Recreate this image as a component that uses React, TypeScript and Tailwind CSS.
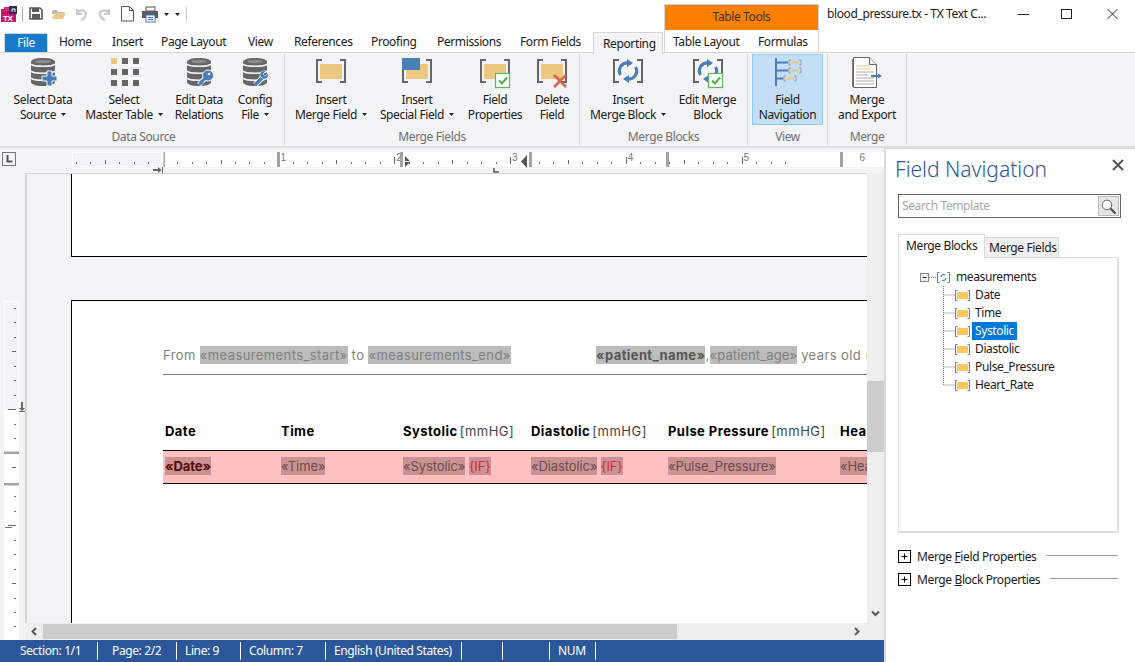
import type { ReactNode } from "react";

const GREY = "#666666";
const TAN = "#ecc77f";
const BLUE = "#4a7fb8";

const tabs = [
  { label: "Home", cls: "w-[53px] pl-[11px]" },
  { label: "Insert", cls: "w-[49px] pl-[11px]" },
  { label: "Page Layout", cls: "w-[87px] pl-[11px]" },
  { label: "View", cls: "w-[46px] pl-[11px]" },
  { label: "References", cls: "w-[77px] pl-[11px]" },
  { label: "Proofing", cls: "w-[66px] pl-[11px]" },
  { label: "Permissions", cls: "w-[83px] pl-[11px]" },
  { label: "Form Fields", cls: "w-[84px] pl-[11px]" },
];

function QuickAccess() {
  return (
    <svg width="190" height="31" viewBox="0 0 190 31">
      {/* app icon */}
      <rect x="1" y="9" width="15" height="13" fill="#c2186b" />
      <rect x="4" y="7" width="8" height="4" fill="#d92a7c" />
      <rect x="9" y="6" width="8" height="8" fill="#2d2a5c" />
      <path d="M12 12V9h3v3" stroke="#fff" strokeWidth="1" fill="none" />
      <text x="3" y="21" fontSize="8" fontWeight="700" fill="#fff" fontFamily="Liberation Sans, sans-serif">TX</text>
      <rect x="22" y="7" width="1" height="15" fill="#b0b0b0" />
      {/* save */}
      <path d="M30 8h10l2 2v9H30z" fill="none" stroke="#5a5a5a" strokeWidth="1.6" />
      <rect x="32" y="8" width="7" height="4" fill="#5a5a5a" />
      <rect x="32" y="14" width="8" height="5" fill="#5a5a5a" />
      {/* open */}
      <path d="M52 12l1-2h4l1 2h6v2H52z" fill="#b9b9b9" />
      <path d="M52 19l3-6h11l-3 6z" fill="#f0c98a" />
      {/* undo + redo */}
      <path d="M77 9v5h5M77 13c3-4 9-3 9 1 0 3-2 5-5 6" fill="none" stroke="#c9c9c9" strokeWidth="2.2" />
      <path d="M109 9v5h-5M109 13c-3-4-9-3-9 1 0 3 2 5 5 6" fill="none" stroke="#c9c9c9" strokeWidth="2.2" />
      {/* new page */}
      <path d="M121.500 6.500h8l4 4v10.500h-12zM129.500 6.500v4h4" fill="#fff" stroke="#555" strokeWidth="1" />
      {/* print */}
      <rect x="146" y="7" width="9" height="4" fill="#fff" stroke="#555" />
      <rect x="142" y="11" width="16" height="7" fill="#5a5a5a" />
      <rect x="146" y="15" width="9" height="7" fill="#fff" stroke="#3f78b3" />
      <rect x="148" y="17" width="5" height="1" fill="#3f78b3" />
      <rect x="148" y="19" width="5" height="1" fill="#3f78b3" />
      <path d="M164 13h5l-2.500 3zM175 13h5l-2.500 3z" fill="#222" />
      <rect x="186" y="7" width="1" height="15" fill="#c8c8c8" />
    </svg>
  );
}

function Caret() {
  return (
    <svg width="5" height="3" viewBox="0 0 5 3" className="inline-block ml-[5px] mb-[2px]">
      <path d="M0 0h5L2.500 3z" fill="#222" />
    </svg>
  );
}

function IconBox({ children }: { children: ReactNode }) {
  return (
    <svg width="40" height="32" viewBox="0 0 40 32" className="shrink-0 overflow-visible">
      {children}
    </svg>
  );
}

function Brackets() {
  return <path d="M11 3H6V25H11M29 3H34V25H29" fill="none" stroke={GREY} strokeWidth="2" />;
}

function Check() {
  return (
    <g>
      <rect x="20.500" y="16.500" width="14" height="14" fill="#fff" stroke="#5cb85c" strokeWidth="1.200" />
      <path d="M24 23.500l3 3 5-6" fill="none" stroke="#4cae4c" strokeWidth="2" />
    </g>
  );
}

function Cycle() {
  return (
    <g fill="none" stroke={BLUE} strokeWidth="3.200">
      <path d="M12.500 18A8 8 0 0 1 20 6" />
      <path d="M27.500 10A8 8 0 0 1 20 22" />
      <path d="M19 2l6 4-6 4z" fill={BLUE} stroke="none" />
      <path d="M21 18l-6 4 6 4z" fill={BLUE} stroke="none" />
    </g>
  );
}

function Database({ children }: { children?: ReactNode }) {
  return (
    <IconBox>
      <path d="M8 5c0-2.500 5-4 12-4s12 1.500 12 4v20c0 2.500-5 4-12 4S8 27.500 8 25z" fill={GREY} />
      <path d="M8 7c2 3 22 3 24 0M8 14c2 3 22 3 24 0M8 21c2 3 22 3 24 0" fill="none" stroke="#f3f4f6" strokeWidth="1.500" />
      <ellipse cx="20" cy="4.500" rx="8" ry="1.800" fill="#8a8a8a" />
      {children}
    </IconBox>
  );
}

const plusIcon = (
  <Database>
    <path d="M24 14h5v5h5v5h-5v5h-5v-5h-5v-5h5z" fill={BLUE} stroke="#f3f4f6" strokeWidth="1" />
  </Database>
);

const keyIcon = (
  <Database>
    <path d="M20 28l7-8" stroke="#f3f4f6" strokeWidth="5" />
    <circle cx="29" cy="18.500" r="5.500" fill={BLUE} stroke="#f3f4f6" />
    <circle cx="30" cy="17" r="1.300" fill="#f3f4f6" />
    <path d="M20 28l7-8M21 24l3 3" stroke={BLUE} strokeWidth="2.800" fill="none" />
  </Database>
);

const wrenchIcon = (
  <Database>
    <path d="M20 28l8-8" stroke="#f3f4f6" strokeWidth="5.500" />
    <path d="M20 28l8-8" stroke={BLUE} strokeWidth="3.500" />
    <path d="M31 14l-3 3 2 2 3-3c1 3-1 7-5 6l-3-3c-1-4 3-6 6-5z" fill={BLUE} stroke="#f3f4f6" strokeWidth=".6" />
  </Database>
);

const gridIcon = (
  <IconBox>
    {[0, 1, 2].map((r) =>
      [0, 1, 2].map((c) => (
        <rect key={`${r}-${c}`} x={7 + c * 11} y={1 + r * 11} width="6" height="6" fill={r === 0 && c === 0 ? TAN : GREY} />
      ))
    )}
  </IconBox>
);

const fieldIcon = (
  <IconBox>
    <Brackets />
    <rect x="9" y="7" width="22" height="15" fill={TAN} />
  </IconBox>
);

const specialIcon = (
  <IconBox>
    <Brackets />
    <rect x="9" y="7" width="22" height="15" fill={TAN} />
    <rect x="5" y="1" width="18" height="12" fill={BLUE} />
  </IconBox>
);

const propsIcon = (
  <IconBox>
    <Brackets />
    <rect x="9" y="7" width="22" height="15" fill={TAN} />
    <Check />
  </IconBox>
);

const deleteIcon = (
  <IconBox>
    <Brackets />
    <rect x="9" y="7" width="22" height="15" fill={TAN} />
    <path d="M22 18l12 12M34 18L22 30" stroke="#d9634c" strokeWidth="2.600" />
  </IconBox>
);

const blockIcon = (
  <IconBox>
    <Brackets />
    <Cycle />
  </IconBox>
);

const editBlockIcon = (
  <IconBox>
    <Brackets />
    <Cycle />
    <Check />
  </IconBox>
);

const navIcon = (
  <IconBox>
    <path d="M8 1v28M8 5.500h12M8 13.500h12M8 21.500h7" fill="none" stroke={BLUE} strokeWidth="2" />
    <g fill="none" stroke="#888" strokeWidth=".8">
      <path d="M23 3h-2v5h2M31 3h2v5h-2M23 11h-2v5h2M31 11h2v5h-2M18 19h-2v5h2M26 19h2v5h-2" />
    </g>
    <path d="M23 5.500h8M23 13.500h8M18 21.500h8" stroke={TAN} strokeWidth="2" />
  </IconBox>
);

const exportIcon = (
  <IconBox>
    <path d="M4.500 2.500h1v27h21" fill="none" stroke="#777" />
    <path d="M6.500 .5h16l7 7v23h-23z" fill="#fff" stroke="#666" />
    <path d="M22.500 .5v7h7" fill="#eee" stroke="#666" />
    <path d="M9 9h14M9 12h15" stroke={TAN} strokeWidth="1" />
    <path d="M9 15h18M9 18h12M9 21h18M9 24h18M9 27h18" stroke="#aaa" strokeWidth="1" />
    <path d="M24 19h8" stroke={BLUE} strokeWidth="2" />
    <path d="M31 16.500l4 2.500-4 2.500z" fill={BLUE} />
  </IconBox>
);

function RibbonButton(props: { icon: ReactNode; top: string; bottom: string; caret?: boolean; cls: string }) {
  return (
    <div className={`flex flex-col items-center pt-[3px] h-[71px] shrink-0 ${props.cls}`}>
      {props.icon}
      <div className="mt-[3px] leading-[15px] text-center whitespace-nowrap">
        {props.top}
        <br />
        {props.bottom}
        {props.caret && <Caret />}
      </div>
    </div>
  );
}

function RibbonGroup(props: { label: string; cls: string; rowCls?: string; labelCls?: string; children: ReactNode }) {
  return (
    <div className={`flex flex-col shrink-0 h-[91px] mt-px border-r border-[#d5d5d5] ${props.cls}`}>
      <div className={`flex h-[73px] ${props.rowCls ?? ""}`}>{props.children}</div>
      <div className={`text-center text-[#6f6f6f] leading-[16px] mt-[2px] ${props.labelCls ?? ""}`}>{props.label}</div>
    </div>
  );
}

function Ribbon() {
  return (
    <div className="flex h-[95px] bg-[#f3f4f6] border-b-2 border-[#dcdcdc]">
      <RibbonGroup label="Data Source" cls="w-[285px]" rowCls="pl-[5px]" labelCls="pl-[3px]">
        <RibbonButton cls="w-[76px]" icon={plusIcon} top="Select Data" bottom="Source" caret />
        <RibbonButton cls="w-[86px]" icon={gridIcon} top="Select" bottom="Master Table" caret />
        <RibbonButton cls="w-[64px]" icon={keyIcon} top="Edit Data" bottom="Relations" />
        <RibbonButton cls="w-[48px]" icon={wrenchIcon} top="Config" bottom="File" caret />
      </RibbonGroup>
      <RibbonGroup label="Merge Fields" cls="w-[295px]" rowCls="pl-[2px]">
        <RibbonButton cls="w-[88px]" icon={fieldIcon} top="Insert" bottom="Merge Field" caret />
        <RibbonButton cls="w-[84px]" icon={specialIcon} top="Insert" bottom="Special Field" caret />
        <RibbonButton cls="w-[72px]" icon={propsIcon} top="Field" bottom="Properties" />
        <RibbonButton cls="w-[42px]" icon={deleteIcon} top="Delete" bottom="Field" />
      </RibbonGroup>
      <RibbonGroup label="Merge Blocks" cls="w-[168px]" rowCls="pl-[8px]">
        <RibbonButton cls="w-[80px]" icon={blockIcon} top="Insert" bottom="Merge Block" caret />
        <RibbonButton cls="w-[79px]" icon={editBlockIcon} top="Edit Merge" bottom="Block" />
      </RibbonGroup>
      <RibbonGroup label="View" cls="w-[80px]" rowCls="pl-[4px]">
        <RibbonButton cls="w-[71px] bg-[#c3def5] outline outline-[#90c8f6] -outline-offset-1" icon={navIcon} top="Field" bottom="Navigation" />
      </RibbonGroup>
      <RibbonGroup label="Merge" cls="w-[79px]">
        <RibbonButton cls="w-[78px]" icon={exportIcon} top="Merge" bottom="and Export" />
      </RibbonGroup>
    </div>
  );
}

function HorizontalRuler() {
  const ticks = Array.from({ length: 50 }, (_, i) => i - 6);
  return (
    <svg width="884" height="25" viewBox="0 148 884 25" className="block">
      <rect x="2.500" y="152.500" width="13" height="13" fill="none" stroke="#777" />
      <path d="M7.500 155v6.500h5" fill="none" stroke="#555" strokeWidth="2" />
      <rect x="72.500" y="152.500" width="90" height="14" fill="#f3f4f6" stroke="#fff" />
      <rect x="165" y="152" width="719" height="15" fill="#fff" />
      <rect x="163.500" y="152" width="1.500" height="15" fill="#a8a8a8" />
      {ticks.map((i) => {
        const x = 162.600 + i * 14.475;
        if (i === 0) return null;
        const inch = i % 8 === 0;
        const half = i % 4 === 0;
        return (
          <rect key={i} x={Math.round(x)} y={inch ? 157 : half ? 160 : 162} width="1" height={inch ? 7 : half ? 4 : 2} fill="#666" />
        );
      })}
      {[1, 2, 3, 4, 5, 6].map((n) => (
        <text key={n} x={164.600 + n * 115.8} y="161" fontSize="10" fill="#777" fontFamily="Liberation Sans, sans-serif">{n}</text>
      ))}
      {[277, 400, 529, 666, 840].map((x) => (
        <rect key={x} x={x} y="152" width="3" height="15" fill="#a3a3a3" />
      ))}
      <path d="M405 156l5 5-5 0zM405 162l5 0-5 5z" fill="#555" />
      <path d="M527 155v13l-6-6.500z" fill="#555" />
      <path d="M494 168v4h5" fill="none" stroke="#555" strokeWidth="1.500" />
      <path d="M153 170h7" stroke="#666" strokeWidth="2" />
      <path d="M158 167l3.500 3-3.500 3z" fill="#666" />
      <rect x="162" y="167" width="1" height="6" fill="#666" />
    </svg>
  );
}

function VerticalRuler() {
  const ticks = Array.from({ length: 24 }, (_, i) => i);
  return (
    <svg width="25" height="467" viewBox="0 173 25 467" className="block shrink-0">
      <rect x="4.500" y="301.500" width="14" height="109" fill="#f3f4f6" stroke="#fff" />
      <rect x="4" y="411" width="15" height="229" fill="#fff" />
      {ticks.map((i) => {
        const y = Math.round(308 + i * 14.475);
        if (i === 10 || i === 12) return null;
        const inch = (i + 1) % 8 === 0;
        const half = (i + 1) % 4 === 0;
        return <rect key={i} x={inch ? 8 : half ? 12 : 14} y={y} width={inch ? 8 : half ? 4 : 2} height="1" fill="#666" />;
      })}
      <rect x="4" y="451.500" width="15" height="2.500" fill="#a3a3a3" />
      <rect x="4" y="483" width="15" height="2.500" fill="#a3a3a3" />
      <rect x="5" y="527" width="7" height="1" fill="#777" />
      <path d="M22 402v7" stroke="#666" strokeWidth="2" />
      <path d="M19 408h6l-3 3z" fill="#666" />
      <rect x="19" y="411" width="6" height="1" fill="#666" />
    </svg>
  );
}

function Chevron({ d }: { d: string }) {
  return (
    <svg width="9" height="9" viewBox="0 0 9 9" className="block">
      <path d={d} fill="none" stroke="#5a5a5a" strokeWidth="2" />
    </svg>
  );
}

function Field({ children, cls }: { children: ReactNode; cls?: string }) {
  return <span className={`inline-block h-[18px] leading-[18px] ${cls ?? "bg-[#bcbcbc]"}`}>{children}</span>;
}

function Document() {
  const mm = <span className="font-normal text-[#444] -ml-[2px] tracking-[0.5px]"> [mmHG]</span>;
  const pink = "bg-[#ca9292]";
  return (
    <div className="flex-1 min-h-0 overflow-hidden bg-[#f3f4f6] border-t border-l-2 border-[#d5d5d5] font-['Inter',sans-serif] text-[13px] tracking-[0.4px] whitespace-nowrap">
      <div className="ml-[44px] w-[1000px] h-[83px] bg-white border-x border-b border-black" />
      <div className="ml-[44px] mt-[43px] w-[1000px] h-[500px] bg-white border border-black pl-[91px] pt-[45px]">
        <div className="flex h-[29px] border-b border-[#777] text-[#808080]">
          <div className="w-[433px]">
            <span className="leading-[18px]">From </span>
            <Field>«measurements_start»</Field>
            <span> to </span>
            <Field>«measurements_end»</Field>
          </div>
          <div>
            <Field cls="bg-[#bcbcbc] font-bold text-[#555]">«patient_name»</Field>
            <span>,</span>
            <Field cls="bg-[#bcbcbc] tracking-[0.1px]">«patient_age»</Field>
            <span> years old (</span>
            <Field>«</Field>
          </div>
        </div>
        <div className="flex items-start h-[29px] mt-[46px] pl-[2px] leading-[20px] tracking-[0.45px] border-b border-black font-bold text-black box-content">
          <div className="w-[116px]">Date</div>
          <div className="w-[122px]">Time</div>
          <div className="w-[128px]">Systolic{mm}</div>
          <div className="w-[137px]">Diastolic{mm}</div>
          <div className="w-[172px]">Pulse Pressure{mm}</div>
          <div>Heart Rate</div>
        </div>
        <div className="flex items-center h-[33px] pl-[2px] tracking-[-0.1px] bg-[#ffc0c0] border-b border-black text-[#6b4a4a]">
          <div className="w-[116px]"><Field cls={`${pink} font-bold text-[#4d0a0a]`}>«Date»</Field></div>
          <div className="w-[122px]"><Field cls={pink}>«Time»</Field></div>
          <div className="w-[128px]"><Field cls={pink}>«Systolic»</Field> <Field cls={`${pink} text-[#d4283f]`}>{"{IF}"}</Field></div>
          <div className="w-[137px]"><Field cls={pink}>«Diastolic»</Field> <Field cls={`${pink} text-[#d4283f]`}>{"{IF}"}</Field></div>
          <div className="w-[172px]"><Field cls={pink}>«Pulse_Pressure»</Field></div>
          <div><Field cls={pink}>«Heart_Rate»</Field></div>
        </div>
      </div>
    </div>
  );
}

function StatusBar() {
  const cells = [
    { t: "Section: 1/1", cls: "w-[98px] pl-[20px]" },
    { t: "Page: 2/2", cls: "w-[79px] pl-[14px]" },
    { t: "Line: 9", cls: "w-[64px] pl-[8px]" },
    { t: "Column: 7", cls: "w-[85px] pl-[8px]" },
    { t: "English (United States)", cls: "w-[136px] pl-[8px]" },
    { t: "", cls: "w-[41px]" },
    { t: "", cls: "w-[47px]" },
    { t: "NUM", cls: "w-[46px] pl-[8px]" },
  ];
  return (
    <div className="flex items-center h-[22px] bg-[#2b579a] text-white">
      {cells.map((c, i) => (
        <div key={i} className={`h-[18px] leading-[18px] border-r border-white ${c.cls}`}>{c.t}</div>
      ))}
    </div>
  );
}

function TreeRow({ label, last, selected }: { label: string; last?: boolean; selected?: boolean }) {
  return (
    <div className="flex items-center h-[18px] ml-[44px]">
      <svg width="29" height="18" viewBox="0 0 29 18" className="shrink-0">
        <path d={last ? "M0.500 0V9H12" : "M0.500 0V18M0.500 9H12"} fill="none" stroke="#777" strokeDasharray="1 1" />
        <path d="M14.500 4.500h-2v10h2M24.500 4.500h2v10h-2" fill="none" stroke="#777" />
        <rect x="14" y="6" width="11" height="7" fill="#fdc65f" />
      </svg>
      <span className={`h-[18px] leading-[18px] px-[3px] ${selected ? "bg-[#0078d7] text-white" : ""}`}>{label}</span>
    </div>
  );
}

function Expander({ children }: { children: ReactNode }) {
  return (
    <div className="flex items-center h-[23px] w-[220px]">
      <svg width="13" height="13" viewBox="0 0 13 13" className="shrink-0">
        <rect x=".5" y=".5" width="12" height="12" fill="#fff" stroke="#000" />
        <path d="M3.500 6.500h6M6.500 3.500v6" stroke="#000" />
      </svg>
      <span className="ml-[6px] whitespace-nowrap">{children}</span>
      <div className="flex-1 h-px bg-[#a0a0a0] ml-[10px] -mt-[3px]" />
    </div>
  );
}

function FieldPanel() {
  return (
    <div className="flex flex-col w-[251px] shrink-0 bg-white border-l-2 border-t border-[#dcdcdc]">
      <div className="flex justify-between pl-[9px] pr-[11px] pt-[5px] h-[45px]">
        <div className="font-light text-[21px] leading-[30px] tracking-normal text-[#2b579a]">Field Navigation</div>
        <svg width="12" height="12" viewBox="0 0 12 12" className="mt-[5px]">
          <path d="M1 1l10 10M11 1L1 11" stroke="#555" strokeWidth="2" />
        </svg>
      </div>
      <div className="ml-[12px] w-[223px] h-[24px] flex items-center border border-[#666] text-[#a8a8a8] pl-[3px]">
        <span className="flex-1">Search Template</span>
        <div className="flex items-center justify-center w-[21px] h-[20px] mr-px bg-[#e6e6e6] border border-[#bbb]">
          <svg width="17" height="17" viewBox="0 0 17 17">
            <circle cx="7" cy="7" r="4.800" fill="#fff" stroke="#666" />
            <path d="M10.500 10.500l5 5" stroke="#444" strokeWidth="1.800" />
          </svg>
        </div>
      </div>
      <div className="flex items-end ml-[12px] mt-[16px] h-[24px] relative z-10">
        <div className="w-[87px] h-[24px] leading-[22px] pl-[7px] bg-white border border-b-0 border-[#d9d9d9]">Merge Blocks</div>
        <div className="w-[74px] h-[21px] leading-[20px] pl-[4px] bg-[#f0f0f0] border border-l-0 border-[#d9d9d9] whitespace-nowrap">Merge Fields</div>
      </div>
      <div className="ml-[12px] w-[221px] h-[276px] -mt-px pt-[10px] border border-r-2 border-b-2 border-[#dedede]">
        <div className="flex items-center h-[18px] ml-[21px]">
          <svg width="36" height="18" viewBox="0 0 36 18" className="shrink-0">
            <rect x=".5" y="5.500" width="8" height="8" fill="#eee" stroke="#888" />
            <path d="M2.500 9.500h4" stroke="#333" />
            <path d="M9 9.500h8" stroke="#777" strokeDasharray="1 1" />
            <path d="M19.500 4.500h-2v10h2M27.500 4.500h2v10h-2" fill="none" stroke="#777" />
            <path d="M21 9a2.500 2.500 0 0 1 4-2M26 10a2.500 2.500 0 0 1-4 2" fill="none" stroke="#3f8fd0" strokeWidth="1.200" />
          </svg>
          <span>measurements</span>
        </div>
        <TreeRow label="Date" />
        <TreeRow label="Time" />
        <TreeRow label="Systolic" selected />
        <TreeRow label="Diastolic" />
        <TreeRow label="Pulse_Pressure" />
        <TreeRow label="Heart_Rate" last />
      </div>
      <div className="ml-[12px] mt-[12px]">
        <Expander>Merge <u>F</u>ield Properties</Expander>
        <Expander>Merge <u>B</u>lock Properties</Expander>
      </div>
    </div>
  );
}

export default function App() {
  return (
    <div className="flex flex-col w-[1135px] h-[662px] overflow-hidden bg-white text-[12px] text-[#1a1a1a] font-['Noto_Sans',sans-serif] tracking-[-0.38px]">
      <div className="flex h-[31px]">
        <div className="w-[664px] shrink-0"><QuickAccess /></div>
        <div className="w-[155px] h-[26px] mt-[4px] shrink-0 bg-[#ff8000] border-t border-x border-[#d5d5d5] text-center leading-[24px] text-[#333]">Table Tools</div>
        <div className="ml-[8px] mt-[6px] leading-[16px] whitespace-nowrap">blood_pressure.tx - TX Text C...</div>
        <svg width="118" height="31" viewBox="0 0 118 31" className="ml-auto shrink-0">
          <path d="M1 14.500h11" stroke="#222" />
          <rect x="44.500" y="9.500" width="10" height="9" fill="none" stroke="#222" />
          <path d="M90.500 9l10 10M100.500 9l-10 10" stroke="#222" />
        </svg>
      </div>
      <div className="flex h-[22px] border-b border-[#d5d5d5] shrink-0">
        <div className="ml-[4px] mt-[2px] w-[44px] h-[20px] bg-[#1979ca] border border-[#cfd8e0] text-white text-center leading-[18px]">File</div>
        {tabs.map((t) => (
          <div key={t.label} className={`leading-[21px] whitespace-nowrap ${t.cls}`}>{t.label}</div>
        ))}
        <div className="w-[70px] h-[22px] mt-px pl-[9px] leading-[21px] bg-[#f3f4f6] border-x border-t border-[#d5d5d5] relative z-10">Reporting</div>
        <div className="ml-[1px] flex w-[155px] h-[22px] bg-white border-x border-[#d5d5d5] -mt-px">
          <div className="w-[86px] pl-[8px] leading-[23px] whitespace-nowrap">Table Layout</div>
          <div className="pl-[7px] leading-[23px]">Formulas</div>
        </div>
      </div>
      <Ribbon />
      <div className="flex flex-1 min-h-0">
        <div className="flex flex-col w-[884px] shrink-0 bg-[#f3f4f6]">
          <HorizontalRuler />
          <div className="flex h-[467px]">
            <VerticalRuler />
            <div className="flex flex-col flex-1 min-w-0">
              <div className="flex h-[450px]">
                <Document />
                <div className="flex flex-col w-[17px] shrink-0 bg-[#efefef]">
                  <div className="h-[208px]" />
                  <div className="h-[71px] bg-[#cdcdcd]" />
                  <div className="flex-1" />
                  <div className="flex justify-center pb-[5px]"><Chevron d="M1 2.500l3.500 3.500 3.500-3.500" /></div>
                </div>
              </div>
              <div className="flex items-center h-[17px] bg-[#efefef]">
                <div className="flex justify-center w-[18px]"><Chevron d="M6 1L2.500 4.500 6 8" /></div>
                <div className="w-[634px] h-[15px] bg-[#cdcdcd]" />
                <div className="flex-1" />
                <div className="mr-[23px]"><Chevron d="M3 1l3.500 3.500L3 8" /></div>
              </div>
            </div>
          </div>
          <StatusBar />
        </div>
        <FieldPanel />
      </div>
    </div>
  );
}
